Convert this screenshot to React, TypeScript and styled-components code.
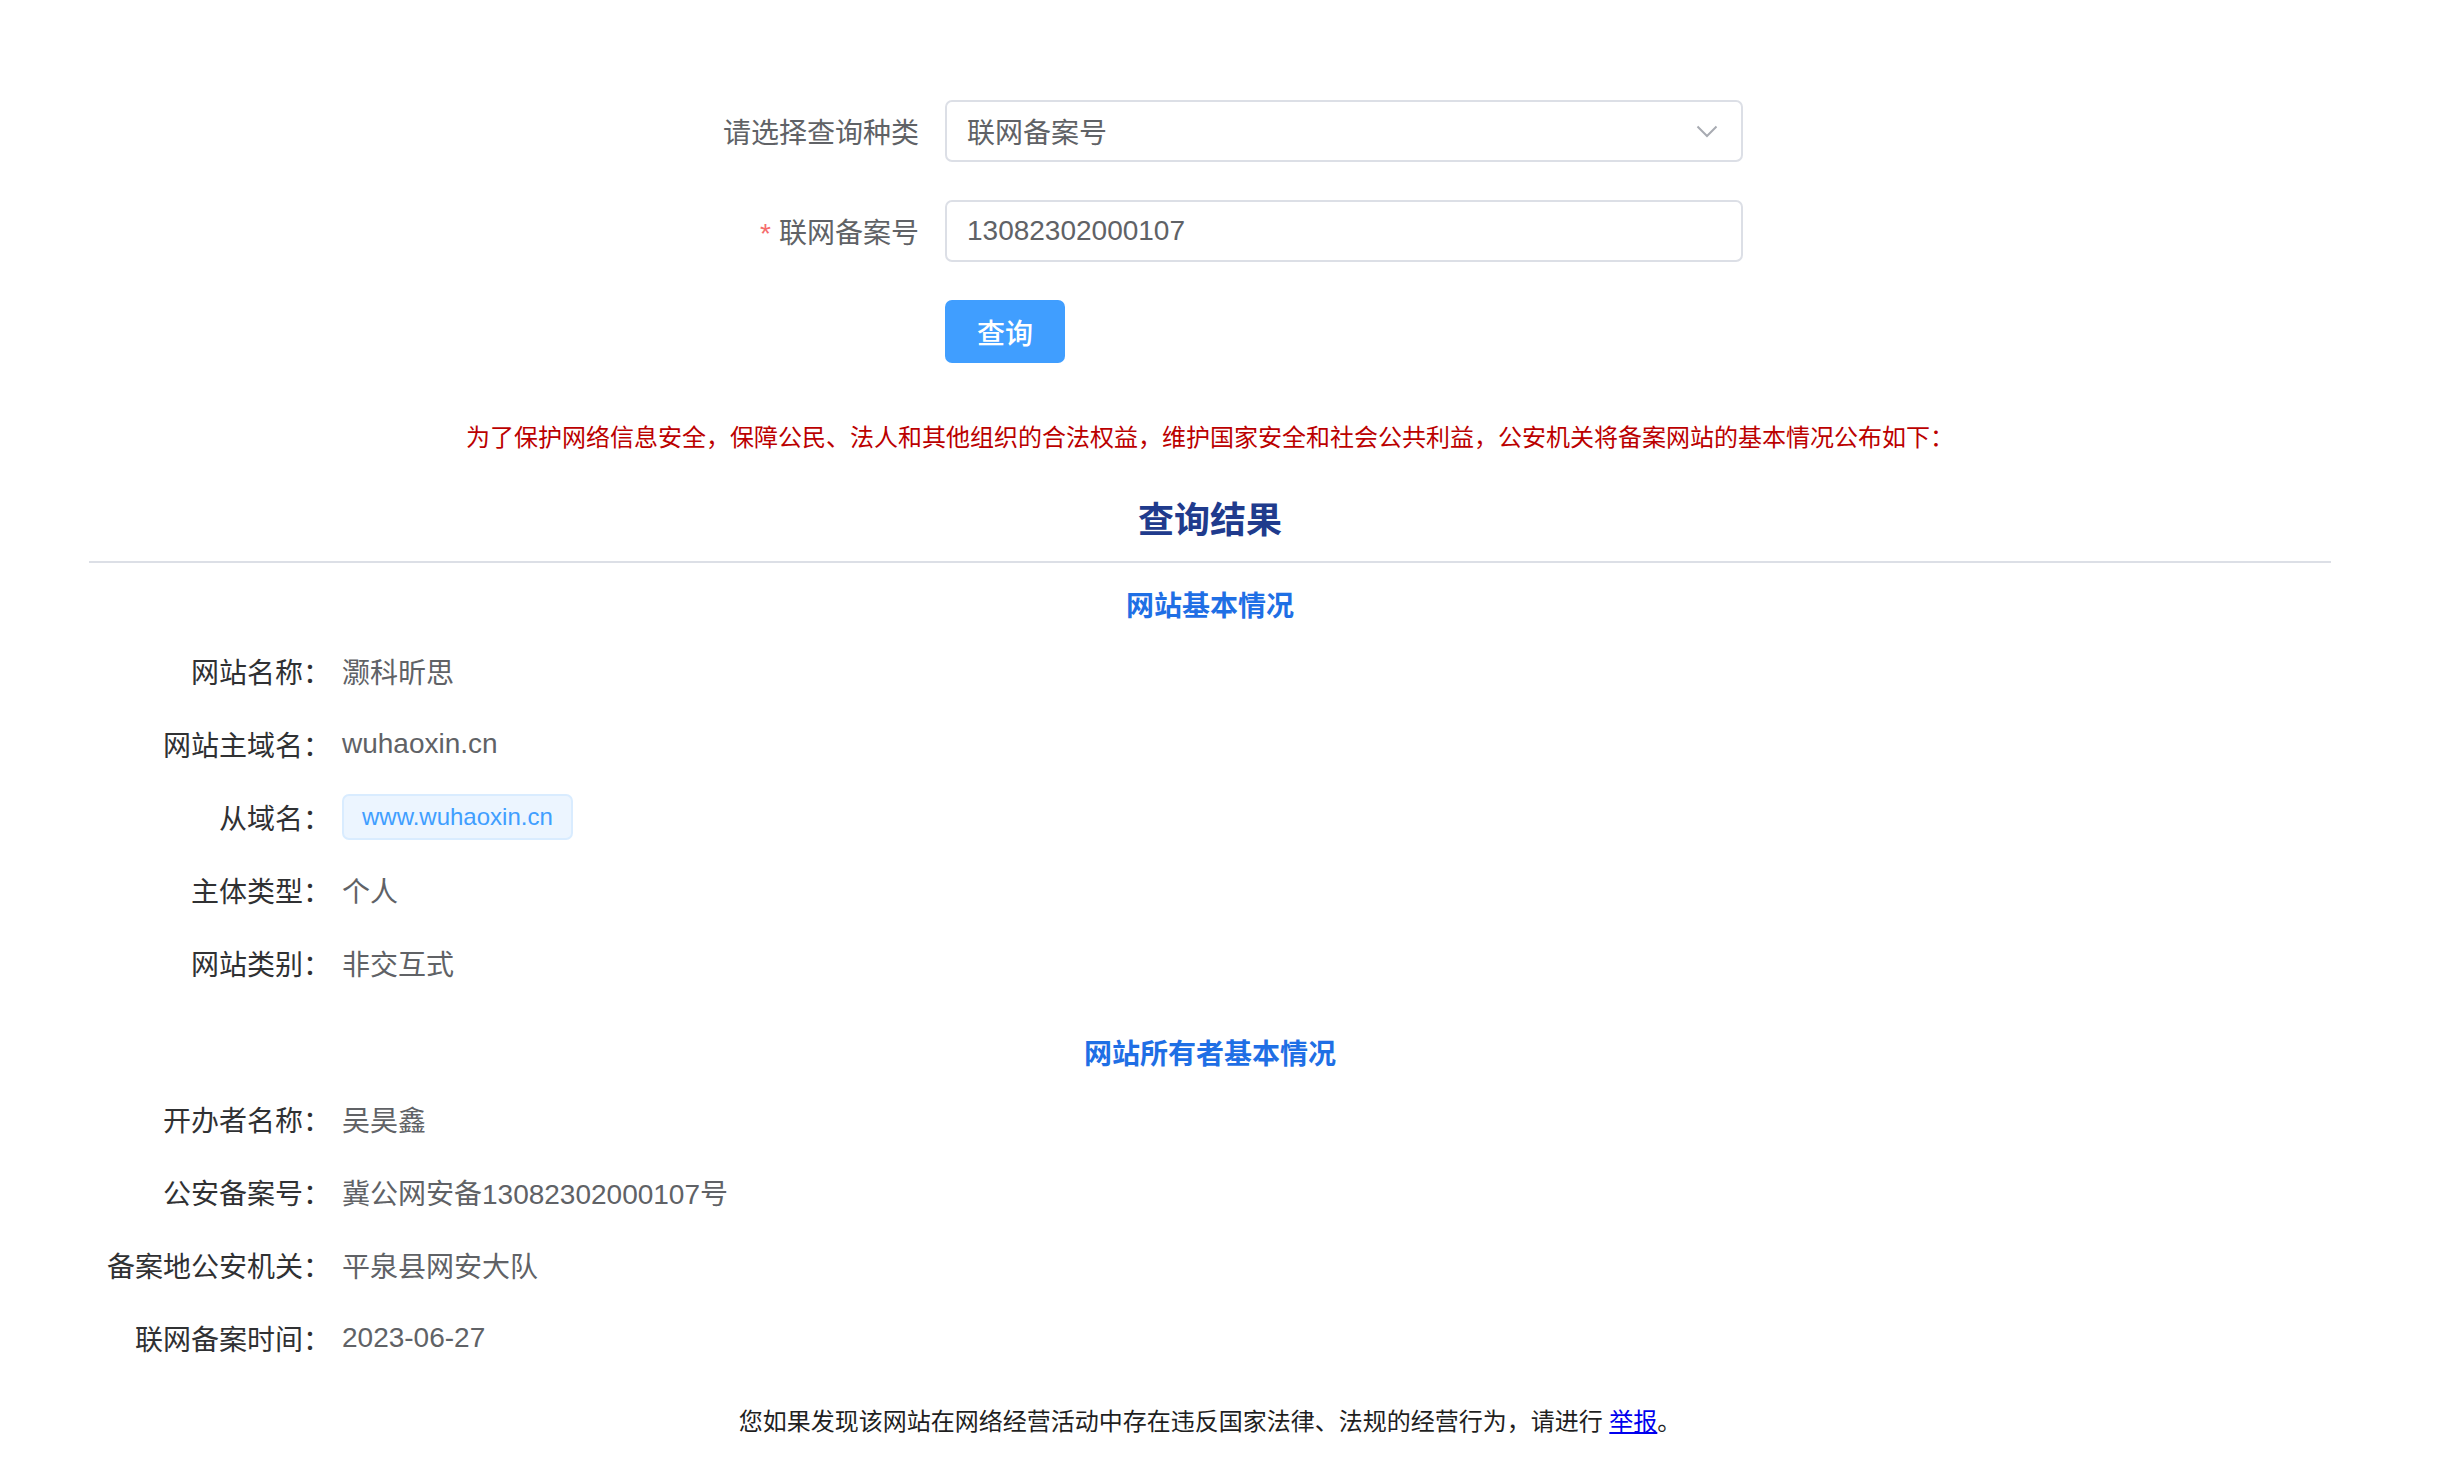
import React from 'react'
import styled, { createGlobalStyle } from 'styled-components'

const GlobalStyle = createGlobalStyle`
  body {
    margin: 0;
    background: #ffffff;
    font-family: "Liberation Sans", "Noto Sans CJK SC", sans-serif;
  }
`

const palette = {
  border: '#dcdfe6',
  text: '#606266',
  label: '#303133',
  primary: '#409eff',
  red: '#bb0000',
  navy: '#203b8d',
  blue: '#1f6fe5',
}

const Page = styled.div`
  width: 2242px;
  margin-left: 89px;
  padding-top: 100px;
  padding-bottom: 40px;
`

// # Query form
const QueryForm = styled.form`
  width: 1074px;
  margin: 0 auto;
  display: flex;
  flex-direction: column;
  gap: 38px;
`

const FormItem = styled.div`
  display: flex;
  align-items: center;
`

const FormLabel = styled.label`
  width: 272px;
  padding-right: 26px;
  box-sizing: border-box;
  text-align: right;
  font-size: 28px;
  color: ${palette.text};
  white-space: nowrap;
`

const Required = styled.span`
  color: #f56c6c;
  margin-right: 8px;
`

const Field = styled.div`
  width: 798px;
  height: 62px;
  box-sizing: border-box;
  border: 2px solid ${palette.border};
  border-radius: 7px;
  padding: 0 23px 0 20px;
  display: flex;
  align-items: center;
  justify-content: space-between;
  font-size: 28px;
  color: ${palette.text};
  background: #fff;
`

const SubmitButton = styled.button`
  width: 120px;
  height: 63px;
  border: none;
  border-radius: 7px;
  background: ${palette.primary};
  color: #fff;
  font-family: inherit;
  font-size: 28px;
  font-weight: 500;
  cursor: pointer;
`

// # Result
const Notice = styled.p`
  margin: 58px 0 0;
  text-align: center;
  font-size: 24px;
  line-height: 34px;
  color: ${palette.red};
`

const ResultTitle = styled.h2`
  margin: 41px 0 0;
  text-align: center;
  font-size: 36px;
  line-height: 50px;
  font-weight: 700;
  color: ${palette.navy};
`

const Divider = styled.hr`
  margin: 15px 0 0;
  border: none;
  height: 2px;
  background: ${palette.border};
`

const SectionTitle = styled.h3<{ $gap: number }>`
  margin: ${(p) => p.$gap}px 0 0;
  text-align: center;
  font-size: 28px;
  line-height: 40px;
  font-weight: 600;
  color: ${palette.blue};
`

const InfoList = styled.dl`
  margin: 21px 0 0;
  display: flex;
  flex-direction: column;
  gap: 27px;
`

const InfoRow = styled.div`
  display: flex;
  align-items: center;
  min-height: 46px;
`

const InfoLabel = styled.dt`
  width: 242px;
  text-align: right;
  font-size: 28px;
  color: ${palette.label};
  white-space: nowrap;
`

const InfoValue = styled.dd`
  margin: 0 0 0 11px;
  font-size: 28px;
  color: ${palette.text};
`

const DomainTag = styled.span`
  display: inline-flex;
  align-items: center;
  height: 46px;
  box-sizing: border-box;
  padding: 0 18px;
  border: 2px solid #d9ecff;
  border-radius: 7px;
  background: #ecf5ff;
  color: ${palette.primary};
  font-size: 24px;
`

const Footer = styled.p`
  margin: 44px 0 0;
  text-align: center;
  font-size: 24px;
  line-height: 34px;
  color: #1f1f1f;

  a {
    color: #0000ee;
    text-decoration: underline;
  }
`

const ChevronDown = () => (
  <svg width='22' height='13' viewBox='0 0 22 13' fill='none'>
    <polyline points='1.5,1.5 11,11 20.5,1.5' stroke='#a8abb2' strokeWidth='2' />
  </svg>
)

interface InfoItem {
  label: string
  value: React.ReactNode
}

const siteInfo: InfoItem[] = [
  { label: '网站名称：', value: '灏科昕思' },
  { label: '网站主域名：', value: 'wuhaoxin.cn' },
  { label: '从域名：', value: <DomainTag>www.wuhaoxin.cn</DomainTag> },
  { label: '主体类型：', value: '个人' },
  { label: '网站类别：', value: '非交互式' },
]

const ownerInfo: InfoItem[] = [
  { label: '开办者名称：', value: '吴昊鑫' },
  { label: '公安备案号：', value: '冀公网安备13082302000107号' },
  { label: '备案地公安机关：', value: '平泉县网安大队' },
  { label: '联网备案时间：', value: '2023-06-27' },
]

const InfoBlock = ({ items }: { items: InfoItem[] }) => (
  <InfoList>
    {items.map((item) => (
      <InfoRow key={item.label}>
        <InfoLabel>{item.label}</InfoLabel>
        <InfoValue>{item.value}</InfoValue>
      </InfoRow>
    ))}
  </InfoList>
)

const App = () => (
  <>
    <GlobalStyle />
    <Page>
      <QueryForm onSubmit={(e) => e.preventDefault()}>
        <FormItem>
          <FormLabel>请选择查询种类</FormLabel>
          <Field>
            <span>联网备案号</span>
            <ChevronDown />
          </Field>
        </FormItem>
        <FormItem>
          <FormLabel>
            <Required>*</Required>联网备案号
          </FormLabel>
          <Field>
            <span>13082302000107</span>
          </Field>
        </FormItem>
        <FormItem>
          <FormLabel />
          <SubmitButton type='submit'>查询</SubmitButton>
        </FormItem>
      </QueryForm>

      <Notice>
        为了保护网络信息安全，保障公民、法人和其他组织的合法权益，维护国家安全和社会公共利益，公安机关将备案网站的基本情况公布如下：
      </Notice>
      <ResultTitle>查询结果</ResultTitle>
      <Divider />

      <SectionTitle $gap={24}>网站基本情况</SectionTitle>
      <InfoBlock items={siteInfo} />

      <SectionTitle $gap={49}>网站所有者基本情况</SectionTitle>
      <InfoBlock items={ownerInfo} />

      <Footer>
        您如果发现该网站在网络经营活动中存在违反国家法律、法规的经营行为，请进行 <a href='#'>举报</a>。
      </Footer>
    </Page>
  </>
)

export default App
